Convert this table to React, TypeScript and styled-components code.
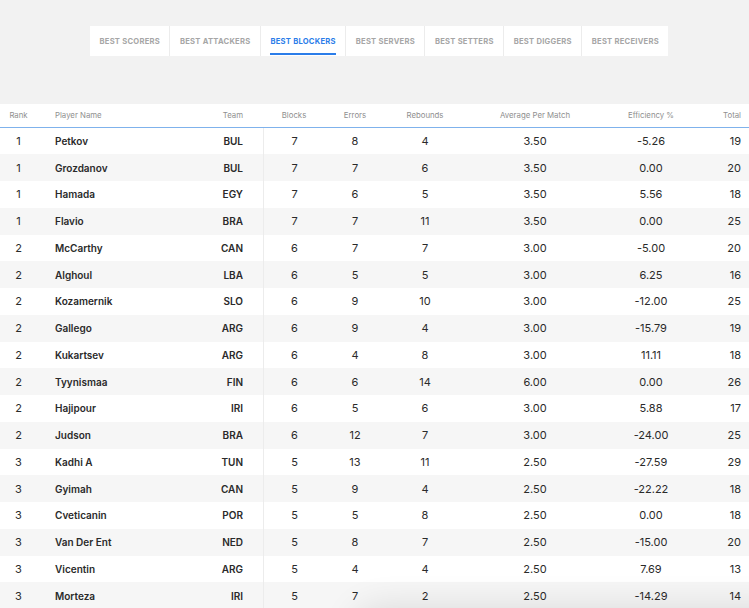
import React from "react";
import styled, { createGlobalStyle } from "styled-components";

const GlobalStyle = createGlobalStyle`
  html, body {
    margin: 0;
    padding: 0;
    background: #f2f2f2;
    font-family: Inter, "Noto Sans", sans-serif;
    overflow: hidden;
  }
`;

const COLUMNS = "37px 163px 63px 62px 60px 80px 140px 92px 52px";

const Page = styled.div`
  width: 749px;
  height: 608px;
  overflow: hidden;
  position: relative;
`;

const TabBar = styled.div`
  display: flex;
  margin: 26px 0 0 90px;
  width: max-content;
  background: #fff;
`;

const Tab = styled.div<{ $active?: boolean }>`
  position: relative;
  height: 30px;
  padding: 0 9.5px;
  display: flex;
  align-items: center;
  font-size: 7.6px;
  font-weight: 700;
  letter-spacing: 0.25px;
  color: ${p => (p.$active ? "#2b7de9" : "#a6a6a6")};
  border-left: 1.5px solid #ececec;
  &:first-child {
    border-left: none;
  }
  &::after {
    content: "";
    display: ${p => (p.$active ? "block" : "none")};
    position: absolute;
    left: 9.5px;
    right: 9.5px;
    bottom: 1.5px;
    height: 2px;
    background: #2b7de9;
  }
`;

const Table = styled.div`
  margin-top: 47.5px;
  background: #fff;
`;

const HeadRow = styled.div`
  display: grid;
  grid-template-columns: ${COLUMNS};
  height: 23px;
  align-items: center;
  border-bottom: 1.5px solid #7fb2ec;
  font-size: 7.8px;
  color: #8f8f8f;
`;

const Row = styled.div<{ $shaded: boolean }>`
  display: grid;
  grid-template-columns: ${COLUMNS};
  height: 26.76px;
  align-items: center;
  background: ${p => (p.$shaded ? "#f6f6f6" : "#fff")};
  color: #2a2a2a;
  font-size: 11px;
`;

const Cell = styled.div<{ $align?: "left" | "center" | "right"; $pl?: number; $pr?: number; $bold?: boolean; $divider?: boolean }>`
  height: 100%;
  display: flex;
  align-items: center;
  justify-content: ${p => (p.$align === "left" ? "flex-start" : p.$align === "right" ? "flex-end" : "center")};
  padding-left: ${p => p.$pl ?? 0}px;
  padding-right: ${p => p.$pr ?? 0}px;
  font-weight: ${p => (p.$bold ? 600 : 400)};
  font-size: ${p => (p.$bold ? "10px" : "inherit")};
  border-left: ${p => (p.$divider ? "1px solid #ececec" : "none")};
  white-space: nowrap;
  box-sizing: border-box;
`;

const Shade = styled.div`
  position: absolute;
  left: 360px;
  right: -40px;
  top: 614px;
  height: 40px;
  border-radius: 20px;
  box-shadow: 0 0 36px 6px rgba(0, 0, 0, 0.12);
  pointer-events: none;
`;

const tabs = [
  "BEST SCORERS",
  "BEST ATTACKERS",
  "BEST BLOCKERS",
  "BEST SERVERS",
  "BEST SETTERS",
  "BEST DIGGERS",
  "BEST RECEIVERS",
];

type Player = [number, string, string, number, number, number, string, string, number];

const players: Player[] = [
  [1, "Petkov", "BUL", 7, 8, 4, "3.50", "-5.26", 19],
  [1, "Grozdanov", "BUL", 7, 7, 6, "3.50", "0.00", 20],
  [1, "Hamada", "EGY", 7, 6, 5, "3.50", "5.56", 18],
  [1, "Flavio", "BRA", 7, 7, 11, "3.50", "0.00", 25],
  [2, "McCarthy", "CAN", 6, 7, 7, "3.00", "-5.00", 20],
  [2, "Alghoul", "LBA", 6, 5, 5, "3.00", "6.25", 16],
  [2, "Kozamernik", "SLO", 6, 9, 10, "3.00", "-12.00", 25],
  [2, "Gallego", "ARG", 6, 9, 4, "3.00", "-15.79", 19],
  [2, "Kukartsev", "ARG", 6, 4, 8, "3.00", "11.11", 18],
  [2, "Tyynismaa", "FIN", 6, 6, 14, "6.00", "0.00", 26],
  [2, "Hajipour", "IRI", 6, 5, 6, "3.00", "5.88", 17],
  [2, "Judson", "BRA", 6, 12, 7, "3.00", "-24.00", 25],
  [3, "Kadhi A", "TUN", 5, 13, 11, "2.50", "-27.59", 29],
  [3, "Gyimah", "CAN", 5, 9, 4, "2.50", "-22.22", 18],
  [3, "Cveticanin", "POR", 5, 5, 8, "2.50", "0.00", 18],
  [3, "Van Der Ent", "NED", 5, 8, 7, "2.50", "-15.00", 20],
  [3, "Vicentin", "ARG", 5, 4, 4, "2.50", "7.69", 13],
  [3, "Morteza", "IRI", 5, 7, 2, "2.50", "-14.29", 14],
];

export default function App() {
  return (
    <Page>
      <GlobalStyle />
      <TabBar>
        {tabs.map(t => (
          <Tab key={t} $active={t === "BEST BLOCKERS"}>{t}</Tab>
        ))}
      </TabBar>
      <Table>
        <HeadRow>
          <Cell>Rank</Cell>
          <Cell $align="left" $pl={18}>Player Name</Cell>
          <Cell $align="right" $pr={20}>Team</Cell>
          <Cell>Blocks</Cell>
          <Cell>Errors</Cell>
          <Cell>Rebounds</Cell>
          <Cell>Average Per Match</Cell>
          <Cell>Efficiency %</Cell>
          <Cell $align="right" $pr={8}>Total</Cell>
        </HeadRow>
        {players.map((p, i) => (
          <Row key={p[1]} $shaded={i % 2 === 1}>
            <Cell>{p[0]}</Cell>
            <Cell $align="left" $pl={18} $bold>{p[1]}</Cell>
            <Cell $align="right" $pr={20} $bold>{p[2]}</Cell>
            <Cell $divider>{p[3]}</Cell>
            <Cell>{p[4]}</Cell>
            <Cell>{p[5]}</Cell>
            <Cell>{p[6]}</Cell>
            <Cell>{p[7]}</Cell>
            <Cell $align="right" $pr={8}>{p[8]}</Cell>
          </Row>
        ))}
      </Table>
      <Shade />
    </Page>
  );
}
